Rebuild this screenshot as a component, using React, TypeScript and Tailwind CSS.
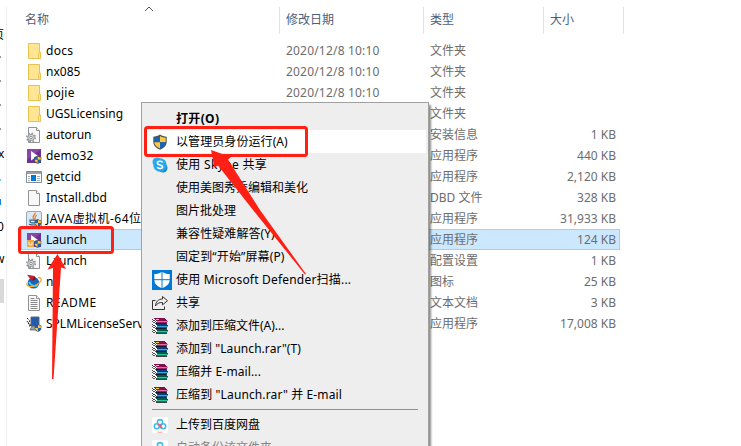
import React from 'react';

type IconName = 'folder' | 'config' | 'installer' | 'window' | 'blank' | 'java' | 'launch' | 'nx' | 'text' | 'server';

const files: { icon: IconName; name: string; date?: string; type: string; size?: string; selected?: boolean; spacing?: string }[] = [
  { icon: 'folder', name: 'docs', date: '2020/12/8 10:10', type: '文件夹', spacing: 'tracking-[0.3px]' },
  { icon: 'folder', name: 'nx085', date: '2020/12/8 10:10', type: '文件夹' },
  { icon: 'folder', name: 'pojie', date: '2020/12/8 10:10', type: '文件夹', spacing: 'tracking-[0.2px]' },
  { icon: 'folder', name: 'UGSLicensing', type: '文件夹' },
  { icon: 'config', name: 'autorun', type: '安装信息', size: '1 KB' },
  { icon: 'installer', name: 'demo32', type: '应用程序', size: '440 KB', spacing: 'tracking-[0.2px]' },
  { icon: 'window', name: 'getcid', type: '应用程序', size: '2,120 KB', spacing: 'tracking-[0.1px]' },
  { icon: 'blank', name: 'Install.dbd', type: 'DBD 文件', size: '328 KB', spacing: 'tracking-[0.1px]' },
  { icon: 'java', name: 'JAVA虚拟机-64位', type: '应用程序', size: '31,933 KB', spacing: 'tracking-[0.45px]' },
  { icon: 'launch', name: 'Launch', type: '应用程序', size: '124 KB', selected: true },
  { icon: 'config', name: 'Launch', type: '配置设置', size: '1 KB' },
  { icon: 'nx', name: 'nx', type: '图标', size: '25 KB' },
  { icon: 'text', name: 'README', type: '文本文档', size: '3 KB', spacing: 'tracking-[0.4px]' },
  { icon: 'server', name: 'SPLMLicenseServer', type: '应用程序', size: '17,008 KB' },
];

const Shield = () => (
  <>
    <path d="M8 .5C5.800 2 3.700 2.600 1.300 2.700v5.100c0 3.700 2.400 6 6.700 7.900 4.300-1.900 6.700-4.200 6.700-7.900V2.700C12.300 2.600 10.200 2 8 .5z" fill="#4b5052" />
    <path d="M8 1.900v6.300H2.300V3.700C4.400 3.500 6.300 3 8 1.900z" fill="#1565c0" />
    <path d="M8 1.900v6.300h5.700V3.700C11.600 3.500 9.700 3 8 1.900z" fill="#ffc83d" />
    <path d="M8 8.200v6.200C4.500 12.800 2.400 11 2.300 8.200z" fill="#ffc83d" />
    <path d="M8 8.200v6.200c3.500-1.600 5.600-3.400 5.700-6.200z" fill="#1565c0" />
  </>
);

const Page = () => (
  <>
    <path d="M2.500.5h8l3 3v12h-11z" fill="#f8f8f8" stroke="#929292" />
    <path d="M10.500.5v3h3" fill="#fff" stroke="#929292" />
  </>
);

const FileIcon = ({ name }: { name: IconName }) => (
  <svg viewBox="0 0 16 16" className="h-4 w-4 shrink-0">
    {name === 'folder' && (
      <>
        <path d="M2.500.5h11v9h1v6h-12z" fill="#ffe594" stroke="#e8c24f" />
        <path d="M12.500 15V10l2-1v6.500h-2z" fill="#ffe594" stroke="#e8c24f" strokeWidth=".8" />
      </>
    )}
    {name === 'blank' && <Page />}
    {name === 'text' && (
      <>
        <Page />
        <path d="M4.500 3.500h4M4.500 5.500h7M4.500 7.500h7M4.500 9.500h7M4.500 11.500h7M4.500 13.500h7" stroke="#8a8a8a" />
      </>
    )}
    {name === 'config' && (
      <>
        <Page />
        <circle cx="5" cy="10.500" r="4.200" fill="none" stroke="#8f9295" strokeWidth="1.600" strokeDasharray="1.650 1.650" />
        <circle cx="5" cy="10.500" r="3.200" fill="#d9dbdc" stroke="#999c9f" />
        <circle cx="5" cy="10.500" r="1.300" fill="#fff" stroke="#85888b" />
      </>
    )}
    {(name === 'installer' || name === 'launch') && (
      <>
        <path d="M1 1h14v14H1z" fill="#6c3293" />
        <path d="M1 1h14L1 12z" fill="#a45ab4" opacity=".55" />
        <path d="M5 3l7 5-7 4.500z" fill="#fff" />
        {name === 'launch' && (
          <>
            <path d="M1 8h7v7H1z" fill="#f3a63a" />
            <path d="M3 10v2.800h3V10" fill="none" stroke="#fff3d5" />
          </>
        )}
        <g transform="translate(7.500 7.500) scale(.53)"><Shield /></g>
      </>
    )}
    {name === 'window' && (
      <>
        <path d="M.5 2.500h15v11H.5z" fill="#fff" stroke="#838c93" />
        <path d="M1 3h14v2H1z" fill="#9aa3aa" />
        <path d="M5 6h5v6H5z" fill="#0078d7" />
        <path d="M2 7.500h2M2 9.500h2M2 11.500h2M11 7.500h3M11 9.500h3M11 11.500h3" stroke="#9bb2c3" />
      </>
    )}
    {name === 'java' && (
      <>
        <rect x=".5" y=".5" width="15" height="15" rx="1.500" fill="#dce8f1" stroke="#8fa9bf" />
        <path d="M9 1.500c1.500 2-3.200 3-1.800 5.300.5.9.8 1.200.3 2M10.800 4.200C8 5.600 9.600 6.400 8.900 8.100" fill="none" stroke="#ed7625" strokeWidth="1.200" />
        <path d="M4 9.200h7v1.200c0 2-7 2-7 0zM11 9.200c2-.6 2 1.700-.3 1.800M3 13.200c3 1 6.500 1 9 0" fill="none" stroke="#2d6290" strokeWidth="1.200" />
        <g transform="translate(8 8) scale(.5)"><Shield /></g>
      </>
    )}
    {name === 'nx' && (
      <>
        <circle cx="7.500" cy="8.800" r="5.800" fill="#1764bb" />
        <path d="M3 8c2 4 6 5 9 3" fill="none" stroke="#49c6ef" strokeWidth="2" />
        <path d="M12 3.500c6 .1 2.700 5.700-3.200 8C3 14 0 11.800 1.200 9" fill="none" stroke="#f3aa27" strokeWidth="1.300" />
        <path d="M1 .8L8.800 2 6 7z" fill="#c9192d" />
        <path d="M8.800 2l1.100 3L6 7z" fill="#731021" />
      </>
    )}
    {name === 'server' && (
      <>
        <path d="M5 1h8v9H5z" fill="#235cae" stroke="#60686f" />
        <path d="M1 2l3 3-2 2 3 2-2 2M1 5l3 5" fill="none" stroke="#222" strokeDasharray="1.500 .7" />
        <path d="M6 10h7l1 4H4z" fill="#9da4a9" stroke="#4f5559" strokeWidth=".7" />
        <g transform="translate(8 8) scale(.5)"><Shield /></g>
      </>
    )}
  </svg>
);

const Books = () => (
  <svg viewBox="0 0 16 16" className="h-4 w-4" shapeRendering="crispEdges">
    <path d="M0 1h4l1 4v10H3l-3-2z" fill="#fff" />
    <path d="M1 0h12l2 3H4z" fill="#850f4b" />
    <path d="M5 3h11v1H5z" fill="#e76ba6" />
    <path d="M5 4h10v1H5z" fill="#a91d66" />
    <path d="M2 5h12l2 3H5z" fill="#083d78" />
    <path d="M5 8h11v1H5z" fill="#36a7e4" />
    <path d="M5 9h10v1H5z" fill="#075aa4" />
    <path d="M2 10h12l2 3H5z" fill="#04594a" />
    <path d="M5 13h11v1H5z" fill="#2bc69a" />
    <path d="M5 14h10v1H5z" fill="#087c61" />
    <path d="M0 1l4 3v1h11M0 6l4 3v1h11M0 11l4 3v1h11" fill="none" stroke="#16111c" strokeWidth=".8" />
    <path d="M0 3l4 3M0 8l4 3M0 13l3 2" stroke="#555" strokeDasharray="1 1" />
    <path d="M4 1h3v1H4z" fill="#eedb30" />
  </svg>
);

const Cloud = () => (
  <svg viewBox="0 0 16 16" className="h-4 w-4">
    <rect width="16" height="16" rx="2" fill="#fff" />
    <circle cx="8" cy="5.200" r="2.600" fill="none" stroke="#42bdf2" strokeWidth="1.600" />
    <circle cx="4.800" cy="9.200" r="2.500" fill="none" stroke="#42bdf2" strokeWidth="1.600" />
    <circle cx="11.200" cy="9.200" r="2.500" fill="none" stroke="#42bdf2" strokeWidth="1.600" />
    <path d="M6 7.300l4.100 4M9.900 7.300L8.500 8.700" stroke="#f15870" strokeWidth="1.600" />
    <path d="M5.500 15.200h5" stroke="#f3999e" />
  </svg>
);

const Skype = () => (
  <svg viewBox="0 0 16 16" className="h-4 w-4">
    <circle cx="5" cy="5" r="4.500" fill="#2ba8eb" />
    <circle cx="11" cy="11" r="4.500" fill="#158bd4" />
    <circle cx="8" cy="8" r="6.700" fill="#28a8ea" />
    <path d="M10.700 5.500C9.800 3.700 5.300 3.900 5.400 6.200c.1 2.400 5.200 1.200 5.200 3.600 0 2.200-4.500 2.300-5.400.4" fill="none" stroke="#fff" strokeWidth="1.600" />
  </svg>
);

const Defender = () => (
  <svg viewBox="0 0 20 20" className="h-5 w-5">
    <path d="M0 0h20v20H0z" fill="#0078d7" />
    <path d="M10 1.700c-2.400 1.600-5 2.300-7.700 2.400v5.400c0 4.300 3 6.800 7.700 8.800 4.700-2 7.700-4.500 7.700-8.800V4.100c-2.700-.1-5.300-.8-7.700-2.400z" fill="#fff" />
    <path d="M10 1v18M2 9.700h16" stroke="#0078d7" />
  </svg>
);

const Share = () => (
  <svg viewBox="0 0 16 16" className="h-4 w-4" fill="none" stroke="#333">
    <path d="M3.500 5.500h-3v9h12v-3" />
    <path d="M10.500 1.500l5 4.200-5 4.200V7.500C7 7.400 5 8.500 3.500 11c.2-4 2.500-6.800 7-7z" />
  </svg>
);

const menuItems: { label: string; icon?: React.ReactNode; bold?: boolean; active?: boolean; spacing?: string }[] = [
  { label: '打开(O)', bold: true, spacing: 'tracking-[0.35px]' },
  { label: '以管理员身份运行(A)', icon: <svg viewBox="0 0 16 16" className="h-4 w-4"><Shield /></svg>, active: true, spacing: 'tracking-[0.08px]' },
  { label: '使用 Skype 共享', icon: <Skype />, spacing: 'tracking-[0.33px]' },
  { label: '使用美图秀秀编辑和美化' },
  { label: '图片批处理' },
  { label: '兼容性疑难解答(Y)', spacing: 'tracking-[0.08px]' },
  { label: '固定到“开始”屏幕(P)', spacing: 'tracking-[0.12px]' },
  { label: '使用 Microsoft Defender扫描...', icon: <Defender />, spacing: 'tracking-[0.2px]' },
  { label: '共享', icon: <Share /> },
  { label: '添加到压缩文件(A)...', icon: <Books /> },
  { label: '添加到 "Launch.rar"(T)', icon: <Books />, spacing: 'tracking-[0.05px]' },
  { label: '压缩并 E-mail...', icon: <Books />, spacing: 'tracking-[0.12px]' },
  { label: '压缩到 "Launch.rar" 并 E-mail', icon: <Books />, spacing: 'tracking-[0.12px]' },
];

const ContextMenu = () => (
  <div className="absolute left-[141px] top-[102px] h-[360px] w-[288px] border border-[#a0a0a0] bg-[#eeeeee] px-[2px] pt-1 text-black shadow-[2px_3px_2px_rgba(0,0,0,0.45)]">
    {menuItems.map((item) => (
      <div key={item.label} className={`flex h-[23px] items-center ${item.active ? 'bg-white' : ''}`}>
        <div className="flex w-8 shrink-0 pl-2">{item.icon}</div>
        <span className={`whitespace-nowrap ${item.bold ? 'font-bold' : ''} ${item.spacing ?? ''}`}>{item.label}</span>
      </div>
    ))}
    <div className="mx-2 my-[3px] h-px bg-[#919191]" />
    <div className="flex h-[23px] items-center">
      <div className="flex w-8 shrink-0 pl-2"><Cloud /></div>
      <span>上传到百度网盘</span>
    </div>
    <div className="flex h-[23px] items-center text-[#858585]">
      <div className="flex w-8 shrink-0 pl-2"><Cloud /></div>
      <span>自动备份该文件夹</span>
    </div>
  </div>
);

// Visible edge of the navigation pane
const NavEdge = () => (
  <div className="relative h-full w-[7px] shrink-0 overflow-hidden text-black">
    <div className="absolute bottom-0 right-0 top-[7px] w-px bg-[#eeeeee]" />
    <span className="absolute -left-[8px] top-[25px]">页</span>
    <div className="absolute left-0 top-[56px] h-[2px] w-px bg-[#999]" />
    <div className="absolute left-0 top-[80px] h-[2px] w-px bg-[#999]" />
    <div className="absolute left-0 top-[104px] h-[2px] w-px bg-[#999]" />
    <div className="absolute left-0 top-[128px] h-[2px] w-px bg-[#999]" />
    <span className="absolute -left-[2px] top-[144px]">x</span>
    <div className="absolute left-0 top-[179px] h-[2px] w-px bg-[#60c8f5]" />
    <div className="absolute left-0 top-[199px] h-[6px] w-px bg-[#1686d9]" />
    <span className="absolute -left-[3px] top-[217px]">0</span>
    <span className="absolute -left-[5px] top-[249px]">w</span>
    <div className="absolute left-0 top-[279px] h-6 w-1 bg-[#d9d9d9]" />
  </div>
);

const App = () => (
  <div className="relative flex h-[446px] w-[741px] overflow-hidden bg-white font-['Noto_Sans','Noto_Sans_CJK_SC',sans-serif] text-[12px] leading-[20px]">
    <NavEdge />
    <div className="w-[734px]">
      <div className="relative flex h-[34px] pt-[7px] text-[#4c607a]">
        <svg viewBox="0 0 10 6" className="absolute left-[137px] top-[6px] h-[6px] w-[10px]"><path d="M1 5l4-4 4 4" fill="none" stroke="#555" /></svg>
        <div className="w-[273px] border-r border-[#e2e2e2] pl-[18px] pt-[3px]">名称</div>
        <div className="w-36 border-r border-[#e2e2e2] pl-[6px] pt-[3px]">修改日期</div>
        <div className="w-[120px] border-r border-[#e2e2e2] pl-[6px] pt-[3px]">类型</div>
        <div className="w-20 border-r border-[#e2e2e2] pl-[6px] pt-[3px]">大小</div>
      </div>
      <div className="pl-[14px] pt-[6px]">
        {files.map((file) => (
          <div
            key={file.name + file.type}
            className={`flex h-[21px] w-[599px] items-center ${file.selected ? 'bg-[#cce8ff] outline outline-1 -outline-offset-1 outline-[#99d1ff]' : ''}`}
          >
            <div className="w-[25px] shrink-0 pl-[5px]"><FileIcon name={file.icon} /></div>
            <div className={`w-[240px] whitespace-nowrap text-black ${file.spacing ?? ''}`}>{file.name}</div>
            <div className="w-36 tracking-[0.19px] text-[#6d6d6d]">{file.date}</div>
            <div className="w-[110px] text-[#6d6d6d]">{file.type}</div>
            <div className="w-[76px] text-right text-[#6d6d6d]">{file.size}</div>
          </div>
        ))}
      </div>
    </div>
    <ContextMenu />
    <svg viewBox="0 0 741 446" className="pointer-events-none absolute inset-0 h-full w-full" fill="none">
      <rect x="19.500" y="227.500" width="93" height="25" rx="2" stroke="#ff2015" strokeWidth="3" />
      <rect x="145.500" y="127.500" width="161" height="28" rx="2" stroke="#ff2015" strokeWidth="3" />
      <path d="M57.500 254L66 269l-5-1.500-7.500 111.500h-1.500L53 268l-5.500 1.500z" fill="#ff2015" />
      <path d="M211 150l20 7-3 2.500L260 210l46 64-1 .5-52-64.500-35-44.500-3.500 2z" fill="#ff2015" />
    </svg>
  </div>
);

export default App;
